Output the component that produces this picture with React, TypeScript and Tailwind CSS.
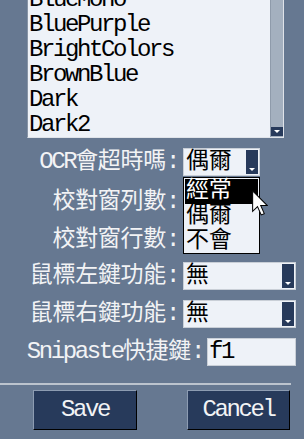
import React from "react";

function T({ s }: { s: string }) {
  const parts = s.split(/([\u2E80-\u9FFF\uF900-\uFAFF]+)/);
  return (
    <>
      {parts.map((p, i) =>
        /[\u2E80-\u9FFF\uF900-\uFAFF]/.test(p) ? (
          <span key={i} className="text-[23px] tracking-[-0.3px]">
            {p}
          </span>
        ) : (
          <span key={i}>{p}</span>
        )
      )}
    </>
  );
}

function Arrow() {
  return (
    <div className="w-[12px] self-stretch my-[1px] mr-[1px] bg-[#273a5b] flex flex-col justify-end items-center pb-[3px]">
      <div className="w-0 h-0 border-l-[3px] border-r-[3px] border-t-[3px] border-l-transparent border-r-transparent border-t-white" />
    </div>
  );
}

function Combo({ value, w }: { value: string; w: string }) {
  return (
    <div className={`${w} h-[28px] flex bg-[#eef2f8] border border-[#c9cfd7]`}>
      <div className="flex-1 flex items-center pl-[2px] text-black leading-none">
        <T s={value} />
      </div>
      <Arrow />
    </div>
  );
}

function Label({ s, w }: { s: string; w: string }) {
  return (
    <div className={`${w} text-right text-[#f2f3f5] leading-none whitespace-nowrap`}>
      <T s={s} />
    </div>
  );
}

export default function App() {
  const items = ["BlueMono", "BluePurple", "BrightColors", "BrownBlue", "Dark", "Dark2"];
  return (
    <div className="relative w-[304px] h-[439px] overflow-hidden bg-[#667891] [font-family:'Liberation_Mono','Noto_Sans_CJK_TC',monospace] text-[24px] tracking-[-2.4px]">
      {/* listbox */}
      <div className="ml-[27px] w-[257px] h-[138px] flex border-l border-[#8794a6] border-b border-b-[#dfe3e9]">
        <div className="flex-1 bg-[#eef2f8] overflow-hidden text-black">
          <div className="-mt-[13px]">
            {items.map((it) => (
              <div key={it} className="h-[25px] leading-[25px] pl-[1px] whitespace-nowrap">
                {it}
              </div>
            ))}
          </div>
        </div>
        <div className="w-[14px] bg-[#a4b0bf] border-l border-[#8f9bab] border-r border-r-[#dfe3e9] flex flex-col justify-end items-end pb-[1px]">
          <div className="w-[12px] h-[9px] bg-[#273a5b] flex items-center justify-center">
            <div className="w-0 h-0 border-l-[3px] border-r-[3px] border-t-[3px] border-l-transparent border-r-transparent border-t-white" />
          </div>
        </div>
      </div>

      {/* row 1 */}
      <div className="mt-[10px] h-[28px] flex items-center">
        <Label s="OCR會超時嗎:" w="w-[178px]" />
        <div className="ml-[5px]">
          <Combo value="偶爾" w="w-[77px]" />
        </div>
      </div>
      {/* row 2 */}
      <div className="mt-[12px] h-[28px] flex items-center">
        <Label s="校對窗列數:" w="w-[178px]" />
      </div>
      {/* row 3 */}
      <div className="mt-[10px] h-[28px] flex items-center">
        <Label s="校對窗行數:" w="w-[178px]" />
      </div>
      {/* row 4 */}
      <div className="mt-[8px] h-[28px] flex items-center">
        <Label s="鼠標左鍵功能:" w="w-[178px]" />
        <div className="ml-[5px]">
          <Combo value="無" w="w-[113px]" />
        </div>
      </div>
      {/* row 5 */}
      <div className="mt-[10px] h-[28px] flex items-center">
        <Label s="鼠標右鍵功能:" w="w-[178px]" />
        <div className="ml-[5px]">
          <Combo value="無" w="w-[113px]" />
        </div>
      </div>
      {/* row 6 */}
      <div className="mt-[10px] h-[28px] flex items-center">
        <Label s="Snipaste快捷鍵:" w="w-[203px]" />
        <div className="ml-[4px] w-[89px] h-[28px] bg-[#eef2f8] border border-[#c9cfd7] flex items-center pl-[1px] text-black leading-none">
          f1
        </div>
      </div>

      {/* separator */}
      <div className="mt-[17px] w-[291px] h-[2px] bg-[#bcc4ce]" />

      {/* buttons */}
      <div className="mt-[5px] flex">
        <button className="ml-[33px] w-[104px] h-[40px] bg-[#273a5b] border border-t-[#8d9cb2] border-l-[#8d9cb2] border-r-black border-b-black text-[#f2f3f5] leading-none">
          Save
        </button>
        <button className="ml-[50px] w-[103px] h-[40px] bg-[#273a5b] border border-t-[#8d9cb2] border-l-[#8d9cb2] border-r-black border-b-black text-[#f2f3f5] leading-none">
          Cancel
        </button>
      </div>

      {/* dropdown popup */}
      <div className="absolute left-[183px] top-[177px] w-[77px] h-[77px] bg-[#eef2f8] border border-black p-[1px]">
        <div className="h-[25px] bg-black text-white flex items-center pl-[1px] leading-none">
          <T s="經常" />
        </div>
        <div className="h-[25px] text-black flex items-center pl-[1px] leading-none">
          <T s="偶爾" />
        </div>
        <div className="h-[25px] text-black flex items-center pl-[1px] leading-none">
          <T s="不會" />
        </div>
      </div>

      {/* cursor */}
      <svg className="absolute left-[252px] top-[190px]" width="16" height="26" viewBox="0 0 12.5 20">
        <path
          d="M0.5 0.5 L0.5 16.5 L4.3 12.8 L7.2 19.3 L9.6 18.3 L6.8 11.9 L11.8 11.9 Z"
          fill="white"
          stroke="black"
          strokeWidth="0.8"
          strokeLinejoin="miter"
        />
      </svg>
    </div>
  );
}
